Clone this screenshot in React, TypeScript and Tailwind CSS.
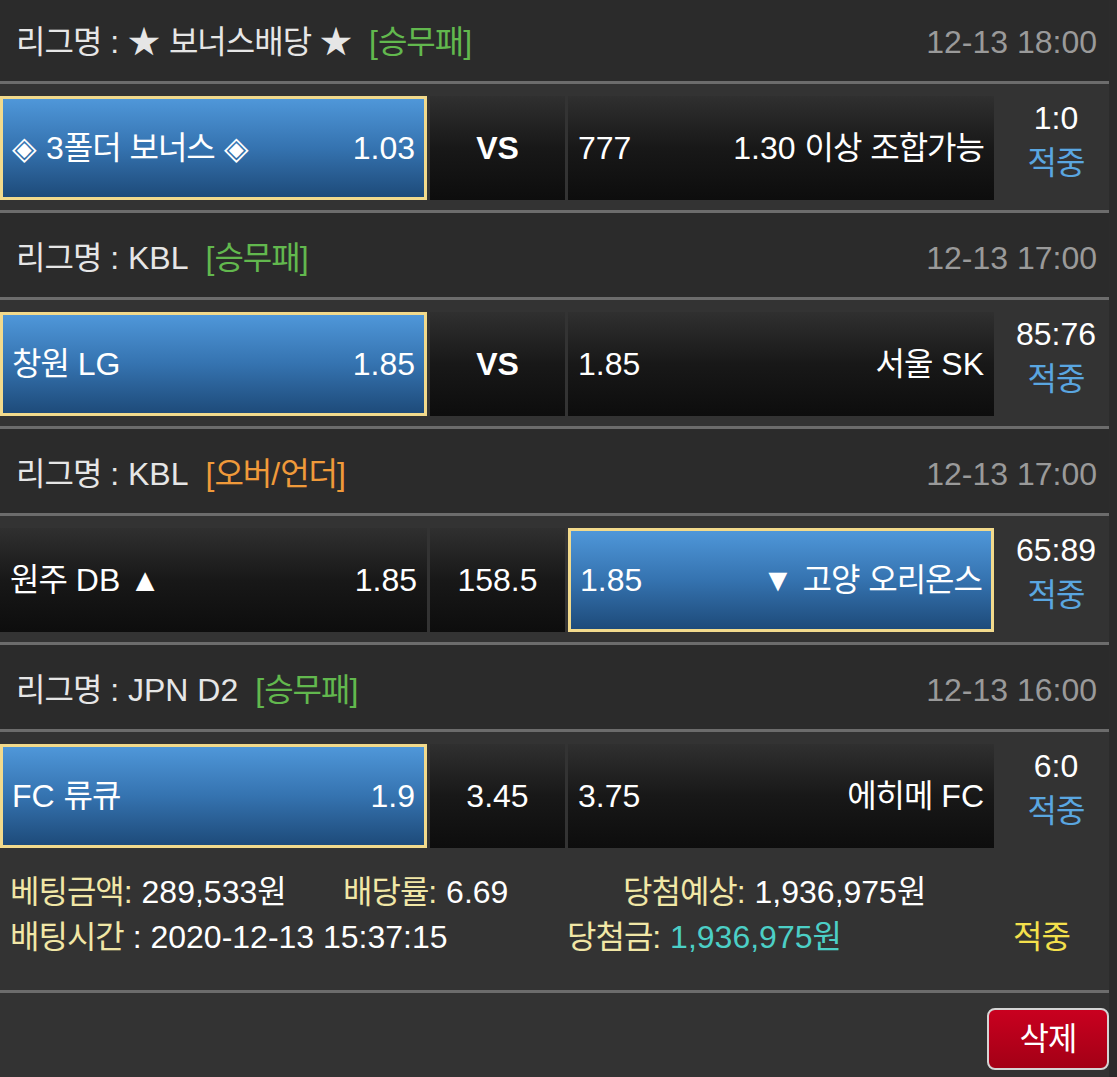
import React from 'react';

const KO = /([\uAC00-\uD7A3]+)/;

// Hangul glyphs in Noto CJK run a little wide; tighten them to match the reference
const T = ({ s }: { s: string }) => (
  <>
    {s.split(KO).map((part, i) =>
      i % 2 === 1 ? (
        <span key={i} className="tracking-[-1px]">
          {part}
        </span>
      ) : (
        <React.Fragment key={i}>{part}</React.Fragment>
      )
    )}
  </>
);

type Bet = {
  league: string;
  type: string;
  typeColor: string;
  time: string;
  home: string;
  homeOdds: string;
  mid: string;
  awayOdds: string;
  away: string;
  pick: 'home' | 'away';
  score: string;
};

const bets: Bet[] = [
  {
    league: '★ 보너스배당 ★',
    type: '[승무패]',
    typeColor: 'text-[#62b84e]',
    time: '12-13 18:00',
    home: '◈ 3폴더 보너스 ◈',
    homeOdds: '1.03',
    mid: 'VS',
    awayOdds: '777',
    away: '1.30 이상 조합가능',
    pick: 'home',
    score: '1:0',
  },
  {
    league: 'KBL',
    type: '[승무패]',
    typeColor: 'text-[#62b84e]',
    time: '12-13 17:00',
    home: '창원 LG',
    homeOdds: '1.85',
    mid: 'VS',
    awayOdds: '1.85',
    away: '서울 SK',
    pick: 'home',
    score: '85:76',
  },
  {
    league: 'KBL',
    type: '[오버/언더]',
    typeColor: 'text-[#f09a3a]',
    time: '12-13 17:00',
    home: '원주 DB ▲',
    homeOdds: '1.85',
    mid: '158.5',
    awayOdds: '1.85',
    away: '▼ 고양 오리온스',
    pick: 'away',
    score: '65:89',
  },
  {
    league: 'JPN D2',
    type: '[승무패]',
    typeColor: 'text-[#62b84e]',
    time: '12-13 16:00',
    home: 'FC 류큐',
    homeOdds: '1.9',
    mid: '3.45',
    awayOdds: '3.75',
    away: '에히메 FC',
    pick: 'home',
    score: '6:0',
  },
];

const Line = () => <div className="h-[3px] bg-[#6c6c6c]" />;

const Cell = ({
  selected,
  left,
  right,
  className,
}: {
  selected: boolean;
  left: string;
  right: string;
  className: string;
}) => (
  <div
    className={
      selected
        ? `${className} flex items-center justify-between px-[9px] border-[3px] border-[#f2da8c] bg-linear-to-b from-[#4f97d9] via-[#3573b0] to-[#1e4b7a]`
        : `${className} flex items-center justify-between px-[10px] bg-linear-to-b from-[#303030] via-[#181818] to-[#0d0d0d]`
    }
  >
    <span className="whitespace-nowrap">
      <T s={left} />
    </span>
    <span className="whitespace-nowrap">
      <T s={right} />
    </span>
  </div>
);

const BetBlock = ({ bet, first }: { bet: Bet; first: boolean }) => (
  <>
    <div
      className={`flex items-center justify-between bg-[#2b2b2b] pl-4 pr-3 ${
        first ? 'h-[81px] pt-[3px]' : 'h-[84px] pt-[6px]'
      }`}
    >
      <div className="whitespace-nowrap text-[#e6e6e6]">
        <T s={`리그명 : ${bet.league}`} />
        <span className={`ml-[17px] ${bet.typeColor}`}>
          <T s={bet.type} />
        </span>
      </div>
      <div className="text-[#9a9a9a]">{bet.time}</div>
    </div>
    <Line />
    <div className="flex h-[126px] bg-[#333333] pt-3 pb-[10px] text-white">
      <Cell selected={bet.pick === 'home'} left={bet.home} right={bet.homeOdds} className="w-[427px]" />
      <div className="ml-[3px] flex w-[135px] items-center justify-center bg-linear-to-b from-[#303030] via-[#181818] to-[#0d0d0d]">
        <span className={bet.mid === 'VS' ? 'font-bold' : ''}>{bet.mid}</span>
      </div>
      <Cell selected={bet.pick === 'away'} left={bet.awayOdds} right={bet.away} className="ml-[3px] w-[426px]" />
      <div className="flex flex-1 flex-col items-center pl-[9px] leading-[45px]">
        <div>{bet.score}</div>
        <div className="text-[#5aa6e0]">
          <T s="적중" />
        </div>
      </div>
    </div>
  </>
);

export default function App() {
  return (
    <div className="flex min-h-screen w-[1117px] bg-[#333333] font-['Liberation_Sans','Noto_Sans_CJK_KR',sans-serif] text-[32px] leading-none">
      <div className="w-[1109px]">
        {bets.map((bet, i) => (
          <React.Fragment key={i}>
            {i > 0 && <Line />}
            <BetBlock bet={bet} first={i === 0} />
          </React.Fragment>
        ))}

        {/* Summary */}
        <div className="bg-[#333333] pt-3 pb-[30px] pl-[10px] leading-[45px] whitespace-nowrap text-white">
          <div className="flex">
            <div className="w-[333px]">
              <span className="text-[#f1e7a6]">
                <T s="베팅금액:" />
              </span>{' '}
              289,533<T s="원" />
            </div>
            <div className="w-[280px]">
              <span className="text-[#f1e7a6]">
                <T s="배당률:" />
              </span>{' '}
              6.69
            </div>
            <div>
              <span className="text-[#f1e7a6]">
                <T s="당첨예상:" />
              </span>{' '}
              1,936,975<T s="원" />
            </div>
          </div>
          <div className="flex">
            <div className="w-[557px]">
              <span className="text-[#f1e7a6]">
                <T s="배팅시간" />
              </span>{' '}
              : 2020-12-13 15:37:15
            </div>
            <div className="w-[446px]">
              <span className="text-[#f1e7a6]">
                <T s="당첨금:" />
              </span>{' '}
              <span className="text-[#4ccfc6]">
                1,936,975<T s="원" />
              </span>
            </div>
            <div className="text-[#f4e04c]">
              <T s="적중" />
            </div>
          </div>
        </div>
        <Line />

        {/* Footer */}
        <div className="flex h-[84px] justify-end bg-[#333333] pt-[15px]">
          <button className="flex h-[62px] w-[122px] items-center justify-center rounded-[8px] border-2 border-[#d4d4d4] bg-linear-to-b from-[#c9001f] to-[#a30016] text-white">
            <T s="삭제" />
          </button>
        </div>
      </div>
      <div className="w-[8px] bg-[#2c2c2c]" />
    </div>
  );
}
